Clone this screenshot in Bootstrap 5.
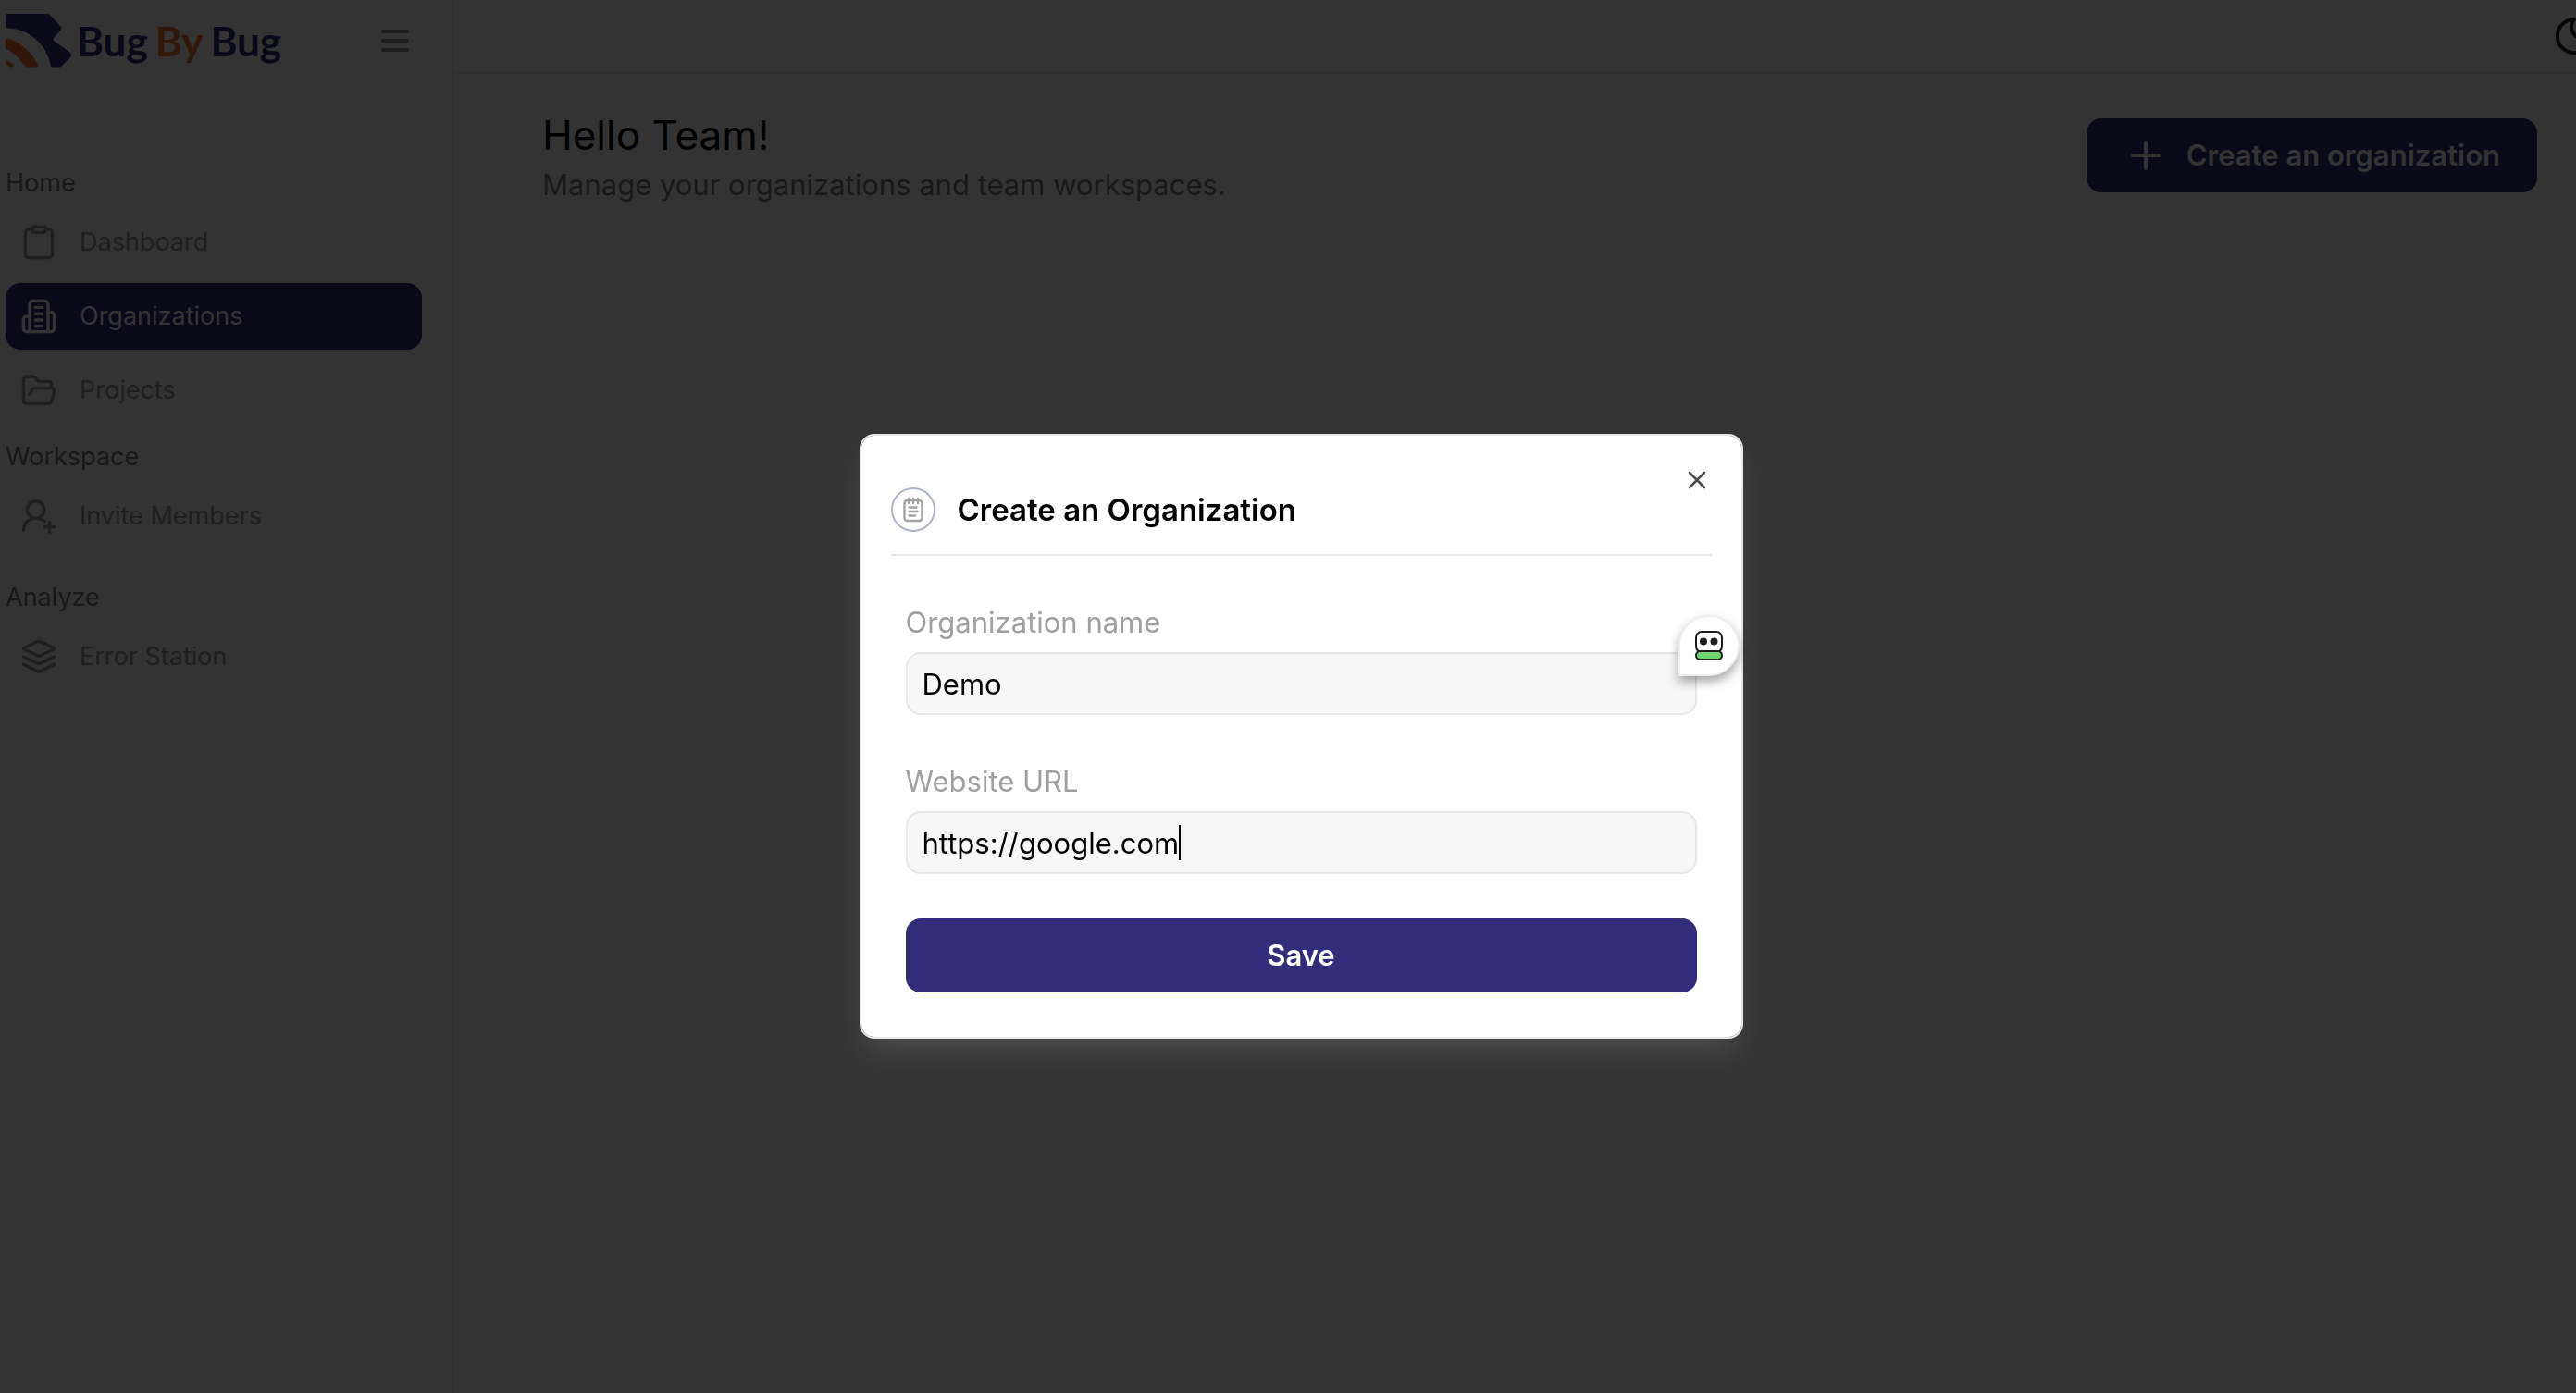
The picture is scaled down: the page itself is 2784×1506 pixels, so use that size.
<!DOCTYPE html>
<html lang="en">
<head>
<meta charset="utf-8">
<meta name="viewport" content="width=device-width, initial-scale=1">
<title>Organizations - BugByBug</title>
<link href="https://cdn.jsdelivr.net/npm/bootstrap@5.3.0/dist/css/bootstrap.min.css" rel="stylesheet">
<style>
  :root { --brand: #322d7a; --rust: #f37032; --soft: #a0a0a0; --line: #e6e6eb; }
  body { font-family: Inter, "Liberation Sans", sans-serif; color: #000; background: #fff; overflow: hidden; }
  svg { flex: none; display: block; }
  .ico { width: 48px; height: 48px; fill: none; stroke: currentColor; stroke-width: 1.7; stroke-linecap: round; stroke-linejoin: round; }
  .ico-bold { stroke-width: 2; }
  .shell { width: calc(100% + 28px); }
  .side { width: 490px; border-right: 2px solid #eee; }
  .side-head { height: 88px; padding-left: 6px; padding-right: 41px; }
  .brand-name { font-family: Lato, sans-serif; font-weight: 700; font-size: 44px; line-height: 52px; gap: 8px; color: var(--brand); }
  .brand-name .by { color: var(--rust); }
  .side-nav { padding: 90px 32px 0 6px; }
  .group { line-height: 40px; font-size: 27px; color: #777c7b; margin-bottom: 8px; }
  .group-far { margin-top: 32px; }
  .side-nav .nav-link { height: 72px; padding: 0 12px; gap: 20px; font-size: 27px; color: var(--soft); border-radius: 16px; }
  .side-nav .nav-link.active { background: var(--brand); color: #fff; }
  .topbar { height: 80px; border-bottom: 2px solid #eee; padding-right: 6px; }
  .intro { padding: 36px 70px 0 96px; }
  .intro h1 { font-size: 44px; line-height: 60px; font-weight: 400; }
  .intro p { font-size: 31px; line-height: 48px; color: #7f7f7f; }
  .main-btn { height: 80px; border: 0; border-radius: 16px; font-size: 31px; font-weight: 600; background: var(--brand); color: #fff; }
  .create-btn { padding: 0 40px; gap: 20px; margin-top: 12px; }
  .modal-backdrop.show { opacity: .8; }
  .modal { overflow: hidden; padding: 86px 0 0 28px; }
  .modal-dialog { max-width: 955px; margin: 0 auto; min-height: 100%; }
  .modal-content { border: 2px solid var(--line); border-radius: 16px; padding: 56px 32px 48px; box-shadow: 0 18px 32px -8px rgba(255,255,255,.14); }
  .dlg-head { border-bottom: 2px solid var(--line); padding-bottom: 24px; gap: 24px; }
  .round-ico { width: 48px; height: 48px; border: 2px solid #b0b5c4; color: var(--soft); }
  .dlg-head h2 { font-size: 33px; line-height: 48px; font-weight: 600; }
  .dlg-form { padding: 48px 16px 0; }
  .dlg-form label { font-size: 31px; line-height: 48px; color: var(--soft); margin-bottom: 8px; display: block; }
  .dlg-form .form-control { height: 68px; border: 2px solid var(--line); border-radius: 16px; background: #f7f7f7; padding: 0 16px; font-size: 31px; color: #000; box-shadow: none; }
  .field + .field { margin-top: 48px; }
  .dlg-form .main-btn { margin-top: 48px; }
  .close-btn { top: 24px; right: 24px; width: 48px; height: 48px; border: 0; background: none; padding: 0; color: #4b4b4b; }
  .caret { left: 295px; top: 15px; width: 2px; height: 38px; background: #000; }
  .helper { right: 2px; top: 194px; width: 66px; height: 66px; border: 2px solid #eee; border-radius: 50% 50% 50% 0; background: #fff; padding: 0; box-shadow: 0 6px 12px rgba(0,0,0,.35); z-index: 3; }
</style>
<script src="https://cdn.jsdelivr.net/npm/bootstrap@5.3.0/dist/js/bootstrap.bundle.min.js"></script>
</head>
<body>
<div class="shell d-flex vh-100">
  <aside class="side flex-shrink-0">
    <div class="side-head d-flex align-items-center justify-content-between">
      <a href="#" class="d-flex align-items-center text-decoration-none">
        <svg width="77" height="60" viewBox="0 0 77 60">
          <path fill="#322d7a" d="M2 1H45Q47 1 48 2L60 15Q61 17 60 18L52 27Q51 29 52 30L70 43Q72 45 71 47L61 57Q60 58.500 58 58.500H51Q49 58.500 48.500 56C45 36 27 17 2 16.500Q0 16.500 0 14V3Q0 1 2 1Z"/>
          <path fill="#f37032" d="M0 29Q0 27 2 27.500C16 31 29 43 35 56Q35.500 58.500 33 58.500H24Q21.500 58.500 20.500 57C16 50 9 43 1.500 39.500Q0 39 0 37Z"/>
          <path fill="#f37032" d="M0 53Q0 51 2 51.500Q7 54 8.500 57Q8.500 58.500 7 58.500H5.500Q4 57 1 55.500Q0 55 0 53Z"/>
        </svg>
        <span class="brand-name d-flex"><span>Bug</span><span class="by">By</span><span>Bug</span></span>
      </a>
      <button type="button" class="btn border-0 p-0" aria-label="Toggle menu">
        <svg width="40" height="32" viewBox="0 0 40 32" fill="none" stroke="#8f8f8f" stroke-width="4" stroke-linecap="round"><path d="M7 6H33M7 16H33M7 26H33"/></svg>
      </button>
    </div>
    <nav class="side-nav">
      <div class="group">Home</div>
      <div class="nav flex-column gap-2">
        <a class="nav-link d-flex align-items-center" href="#">
          <svg class="ico" viewBox="0 0 24 24"><path d="M8.500 5H6.500A1.800 1.800 0 0 0 4.700 6.800V18.500A1.800 1.800 0 0 0 6.500 20.300H17.500A1.800 1.800 0 0 0 19.300 18.500V6.800A1.800 1.800 0 0 0 17.500 5H15.500"/><rect x="8.500" y="3.600" width="7" height="3" rx="1"/></svg>Dashboard</a>
        <a class="nav-link active d-flex align-items-center" href="#" aria-current="page">
          <svg class="ico" viewBox="0 0 24 24"><path d="M7 20.300V5.400A1.700 1.700 0 0 1 8.700 3.700H15.300A1.700 1.700 0 0 1 17 5.400V20.300M7 12H5.500A1.800 1.800 0 0 0 3.700 13.800V18.600A1.700 1.700 0 0 0 5.400 20.300H18.600A1.700 1.700 0 0 0 20.300 18.600V11.500A1.800 1.800 0 0 0 18.500 9.700H17M10.200 7.200H13.800M10.200 10.600H13.800M10.200 14H13.800M10.200 17.300H13.800"/></svg>Organizations</a>
        <a class="nav-link d-flex align-items-center" href="#">
          <svg class="ico" viewBox="0 0 24 24"><path d="M7 14.300L8.600 11.500Q9 10.800 9.800 10.800H18.700Q20.600 10.800 20.200 12.700L18.900 17.800Q18.500 19.200 17.200 19.200H5.400A1.700 1.700 0 0 1 3.700 17.500V6.200A1.700 1.700 0 0 1 5.400 4.500H8.600Q9.400 4.500 9.900 5.100L11.200 6.700Q11.700 7.200 12.400 7.200H17.200A1.600 1.600 0 0 1 18.800 8.800V10.600"/></svg>Projects</a>
      </div>
      <div class="group mt-3">Workspace</div>
      <div class="nav flex-column">
        <a class="nav-link d-flex align-items-center" href="#">
          <svg class="ico" viewBox="0 0 24 24"><circle cx="10.300" cy="8.500" r="4.600"/><path d="M3.700 19.700C3.700 16 6.500 13.200 10 13.200Q13 13.200 15.300 14.800M17.800 15.200V20.600M15.100 17.900H20.500"/></svg>Invite Members</a>
      </div>
      <div class="group group-far">Analyze</div>
      <div class="nav flex-column">
        <a class="nav-link d-flex align-items-center" href="#">
          <svg class="ico" viewBox="0 0 24 24"><path d="M11.300 3.800Q12 3.500 12.700 3.800L19.800 7Q20.600 7.500 19.800 8L12.700 11.400Q12 11.700 11.300 11.400L4.200 8Q3.400 7.500 4.200 7ZM3.700 12L11.300 15.600Q12 15.900 12.700 15.600L20.300 12M3.700 16.200L11.300 19.900Q12 20.200 12.700 19.900L20.300 16.200"/></svg>Error Station</a>
      </div>
    </nav>
  </aside>
  <div class="flex-grow-1">
    <header class="topbar d-flex align-items-center justify-content-end">
      <button type="button" class="btn border-0 p-0" aria-label="Dark mode">
        <svg class="ico ico-bold" viewBox="0 0 24 24"><path d="M12 3A5.900 5.900 0 0 0 20.900 11.100A9 9 0 1 1 12 3Z"/></svg>
      </button>
    </header>
    <main class="intro d-flex justify-content-between align-items-start">
      <div>
        <h1 class="mb-0">Hello Team!</h1>
        <p class="mb-0">Manage your organizations and team workspaces.</p>
      </div>
      <button type="button" class="main-btn create-btn d-flex align-items-center">
        <svg width="48" height="48" viewBox="0 0 48 48" fill="none" stroke="currentColor" stroke-width="4" stroke-linecap="round"><path d="M24 10V38M10 24H38"/></svg>Create an organization
      </button>
    </main>
  </div>
</div>

<div class="modal-backdrop show"></div>
<div class="modal d-block" tabindex="-1" role="dialog" aria-modal="true" aria-labelledby="dlgTitle">
  <div class="modal-dialog d-flex align-items-center">
    <div class="modal-content">
      <button type="button" class="close-btn position-absolute" aria-label="Close">
        <svg width="48" height="48" viewBox="0 0 48 48" fill="none" stroke="currentColor" stroke-width="2.500" stroke-linecap="round"><path d="M16 16L32 32M32 16L16 32"/></svg>
      </button>
      <div class="dlg-head d-flex align-items-center">
        <span class="round-ico rounded-circle d-flex align-items-center justify-content-center">
          <svg width="24" height="28" viewBox="0 0 24 28" fill="none" stroke="currentColor" stroke-width="2.300" stroke-linecap="round"><rect x="2.500" y="4" width="19" height="22" rx="3"/><path d="M7 2V7M12 2V7M17 2V7M7.500 11.500H15.500M7.500 16H16.500M7.500 20.500H14"/></svg>
        </span>
        <h2 class="mb-0" id="dlgTitle">Create an Organization</h2>
      </div>
      <form class="dlg-form">
        <div class="field">
          <label for="orgName">Organization name</label>
          <input class="form-control" id="orgName" type="text" value="Demo">
        </div>
        <div class="field">
          <label for="orgUrl">Website URL</label>
          <div class="position-relative">
            <input class="form-control" id="orgUrl" type="text" value="https://google.com">
            <span class="caret position-absolute"></span>
          </div>
        </div>
        <button type="button" class="main-btn w-100">Save</button>
      </form>
      <button type="button" class="helper position-absolute d-flex align-items-center justify-content-center" aria-label="Fill form">
        <svg width="32" height="34" viewBox="0 0 32 34" stroke="#1c1c1c" stroke-width="2"><rect x="2" y="2" width="28" height="22" rx="6" fill="#fff"/><rect x="2" y="23" width="28" height="9" rx="4.500" fill="#6fd66f"/><circle cx="10" cy="12.500" r="3" fill="#1c1c1c"/><circle cx="21.500" cy="12.500" r="3" fill="#1c1c1c"/></svg>
      </button>
    </div>
  </div>
</div>
</body>
</html>
